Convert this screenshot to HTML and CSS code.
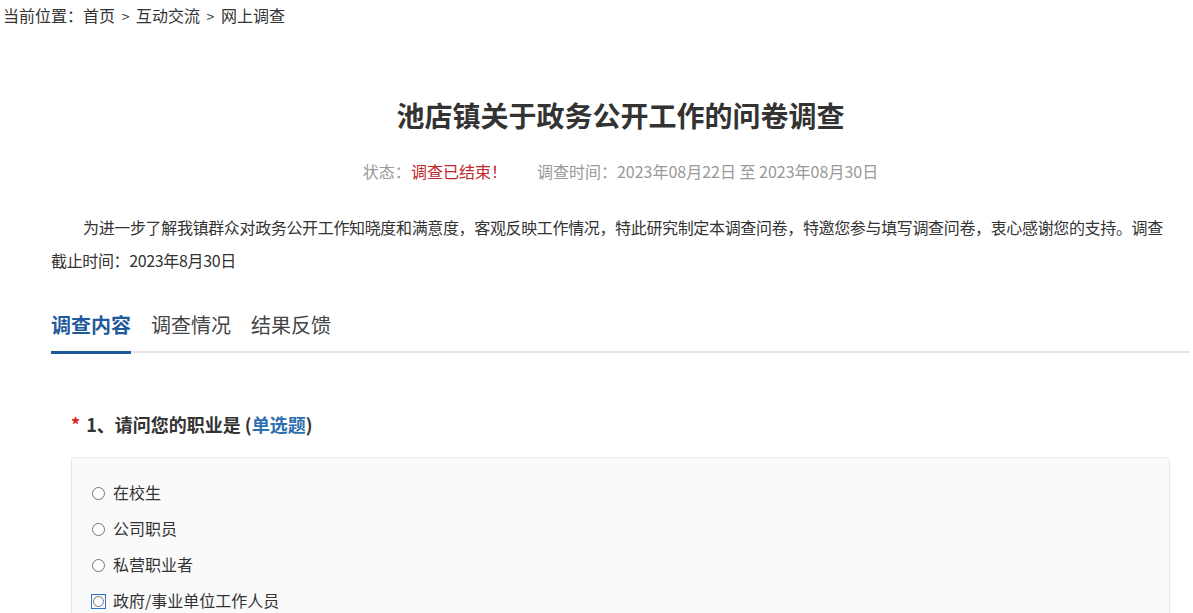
FILE: index.html
```html
<!DOCTYPE html>
<html lang="zh-CN">
<head>
<meta charset="utf-8">
<title>网上调查</title>
<link rel="stylesheet" href="styles.css">
</head>
<body>
<div class="crumb">当前位置：<a href="#">首页</a> <span class="sep">&gt;</span> <a href="#">互动交流</a> <span class="sep">&gt;</span> <a href="#">网上调查</a></div>
<div class="page">
  <h1 class="title">池店镇关于政务公开工作的问卷调查</h1>
  <div class="meta"><span>状态：<em class="status">调查已结束！</em></span><span>调查时间：2023年08月22日 至 2023年08月30日</span></div>
  <p class="intro">为进一步了解我镇群众对政务公开工作知晓度和满意度，客观反映工作情况，特此研究制定本调查问卷，特邀您参与填写调查问卷，衷心感谢您的支持。调查截止时间：2023年8月30日</p>
  <div class="tabs">
    <a class="tab active" href="#">调查内容</a>
    <a class="tab" href="#">调查情况</a>
    <a class="tab" href="#">结果反馈</a>
  </div>
  <div class="question">
    <div class="q-title"><span class="req">*</span>1、请问您的职业是 (<span class="q-type">单选题</span>)</div>
    <div class="options">
      <label class="opt"><span class="radio-box"><span class="radio"></span></span>在校生</label>
      <label class="opt"><span class="radio-box"><span class="radio"></span></span>公司职员</label>
      <label class="opt"><span class="radio-box"><span class="radio"></span></span>私营职业者</label>
      <label class="opt"><span class="radio-box focused"><span class="radio"></span></span>政府/事业单位工作人员</label>
      <label class="opt"><span class="radio-box"><span class="radio"></span></span>自由职业者</label>
    </div>
  </div>
</div>
</body>
</html>
```
FILE: styles.css
```css
html, body {
  margin: 0;
  padding: 0;
  background: #fff;
  color: #333;
  font-family: "Microsoft YaHei", "Noto Sans CJK SC", "Noto Sans", sans-serif;
}
a { color: inherit; text-decoration: none; }

.crumb {
  font-size: 16px;
  line-height: 30px;
  padding-left: 3px;
  color: #333;
}
.crumb .sep { font-size: 14px; padding: 0 3px; }

.page {
  width: 1139px;
  margin-left: 51px;
}

.title {
  margin: 67px 0 0;
  text-align: center;
  font-size: 28px;
  line-height: 34px;
  font-weight: bold;
  color: #333;
}
.meta {
  margin-top: 27px;
  text-align: center;
  font-size: 16px;
  line-height: 24px;
  color: #999;
  display: flex;
  justify-content: center;
  gap: 30px;
}
.status { font-style: normal; color: #c1272d; }

.intro {
  margin: 28px 0 0;
  width: 1122px;
  font-size: 16px;
  line-height: 33px;
  letter-spacing: -0.35px;
  text-indent: 32px;
  color: #333;
}

.tabs {
  margin-top: 30px;
  display: flex;
  gap: 20px;
  border-bottom: 2px solid #e5e5ea;
}
.tab {
  font-size: 20px;
  line-height: 36px;
  padding-bottom: 8px;
  color: #444;
  margin-bottom: -3px;
  border-bottom: 3px solid transparent;
}
.tab.active {
  color: #1f5b9a;
  font-weight: bold;
  border-bottom-color: #1f5b9a;
}

.question {
  padding: 0 20px;
  margin-top: 58px;
}
.q-title {
  font-size: 18px;
  line-height: 26px;
  font-weight: bold;
  color: #333;
}
.req { color: #e02020; margin-right: 6px; }
.q-type { color: #2e6fb0; }

.options {
  margin-top: 20px;
  background: #fafafa;
  border: 1px solid #e9e9e9;
  border-radius: 3px;
  padding: 16px 19px;
  display: flex;
  flex-direction: column;
}
.opt {
  display: flex;
  align-items: center;
  font-size: 16px;
  line-height: 36px;
  color: #333;
}
.radio-box {
  width: 15px;
  height: 15px;
  display: flex;
  align-items: center;
  justify-content: center;
  margin-right: 7px;
  margin-top: 2px;
  flex: none;
  box-sizing: border-box;
}
.radio-box.focused {
  border: 1.5px solid #2a74d6;
}
.radio {
  width: 11px;
  height: 11px;
  box-sizing: border-box;
  border: 1px solid #767676;
  border-radius: 50%;
  background: #fff;
}
.radio-box:not(.focused) .radio {
  width: 13px;
  height: 13px;
}
```
